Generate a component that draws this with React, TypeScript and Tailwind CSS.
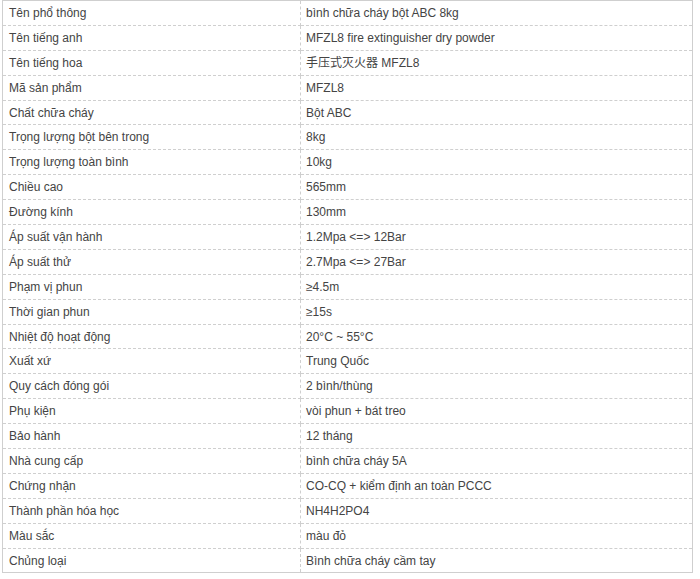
import React from 'react';

const specs: [string, string][] = [
  ['Tên phổ thông', 'bình chữa cháy bột ABC 8kg'],
  ['Tên tiếng anh', 'MFZL8 fire extinguisher dry powder'],
  ['Tên tiếng hoa', '手压式灭火器 MFZL8'],
  ['Mã sản phẩm', 'MFZL8'],
  ['Chất chữa cháy', 'Bột ABC'],
  ['Trọng lượng bột bên trong', '8kg'],
  ['Trọng lượng toàn bình', '10kg'],
  ['Chiều cao', '565mm'],
  ['Đường kính', '130mm'],
  ['Áp suất vận hành', '1.2Mpa <=> 12Bar'],
  ['Áp suất thử', '2.7Mpa <=> 27Bar'],
  ['Phạm vị phun', '≥4.5m'],
  ['Thời gian phun', '≥15s'],
  ['Nhiệt độ hoạt động', '20°C ~ 55°C'],
  ['Xuất xứ', 'Trung Quốc'],
  ['Quy cách đóng gói', '2 bình/thùng'],
  ['Phụ kiện', 'vòi phun + bát treo'],
  ['Bảo hành', '12 tháng'],
  ['Nhà cung cấp', 'bình chữa cháy 5A'],
  ['Chứng nhận', 'CO-CQ + kiểm định an toàn PCCC'],
  ['Thành phần hóa học', 'NH4H2PO4'],
  ['Màu sắc', 'màu đỏ'],
  ['Chủng loại', 'Bình chữa cháy cầm tay'],
];

export default function App() {
  return (
    <div
      className="w-[700px] h-[579px] overflow-hidden bg-white pl-[2px] text-[#444]"
      style={{ fontFamily: '"Liberation Sans", Arial, "Noto Sans CJK SC", sans-serif' }}
    >
      <table className="w-[691px] border-collapse border border-solid border-[#cfcfcf] text-[12px]">
        <tbody>
          {specs.map(([label, value]) => (
            <tr key={label} className="h-[24.9px]">
              <td className="w-[298px] border border-dashed border-[#cfcfcf] px-[6px] py-0 align-middle">
                {label}
              </td>
              <td className="border border-dashed border-[#cfcfcf] px-[5px] py-0 align-middle">
                {value}
              </td>
            </tr>
          ))}
        </tbody>
      </table>
      <p className="mt-[4px] text-[13px] leading-[20px] text-[#333] whitespace-nowrap">
        Lưu ý: bình chữa cháy cần được kiểm tra định kỳ, bảo dưỡng theo đúng hướng dẫn của nhà sản xuất để đảm bảo hiệu quả
      </p>
    </div>
  );
}
